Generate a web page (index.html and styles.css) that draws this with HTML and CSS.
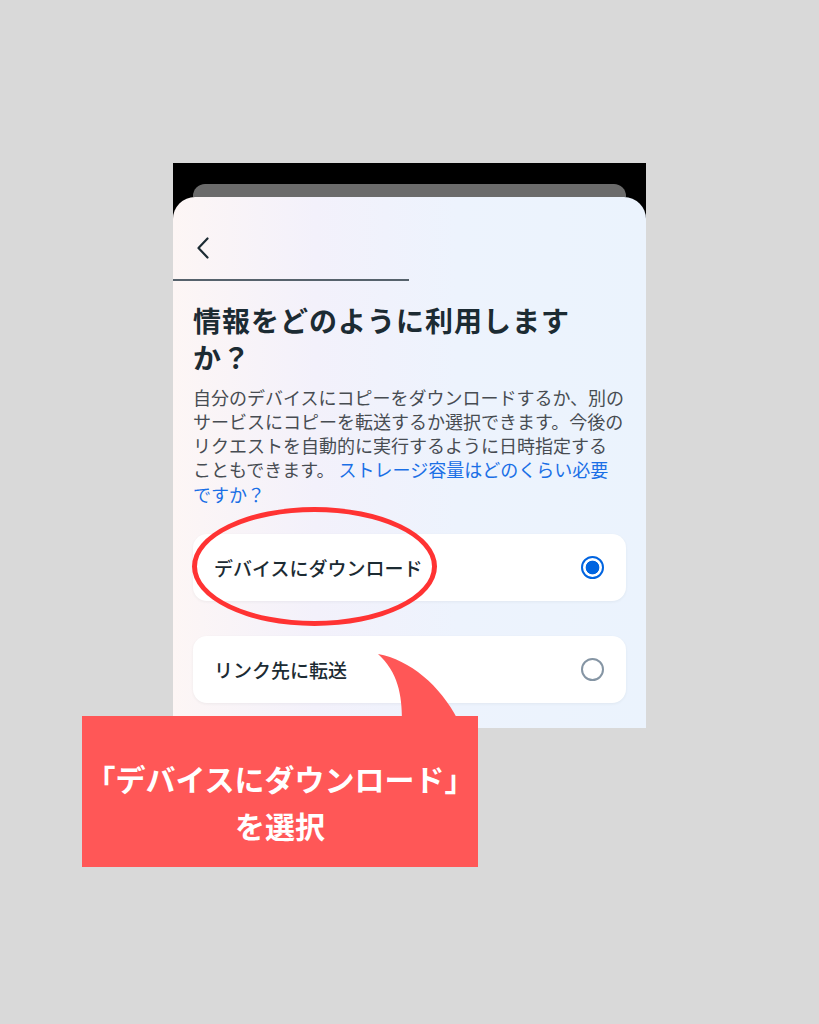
FILE: index.html
```html
<!DOCTYPE html>
<html lang="ja">
<head>
    <meta charset="UTF-8">
    <meta name="viewport" content="width=device-width, initial-scale=1.0">
    <title>情報をどのように利用しますか？</title>
    <link rel="stylesheet" href="styles.css">
</head>
<body>
    <div class="stage">
        <!-- スマホ画面 -->
        <div class="phone">
            <div class="peek"></div>
            <div class="sheet">
                <div class="topbar">
                    <svg class="back" viewBox="0 0 14 22" aria-label="戻る">
                        <path d="M11.5 1.5 L2.5 11 L11.5 20.5" fill="none" stroke="#1c2b33" stroke-width="2.2" stroke-linecap="round" stroke-linejoin="round"/>
                    </svg>
                </div>
                <div class="progress"></div>

                <div class="content">
                    <h1>情報をどのように利用しますか？</h1>
                    <p class="desc">
                        自分のデバイスにコピーをダウンロードするか、別のサービスにコピーを転送するか選択できます。今後のリクエストを自動的に実行するように日時指定する<br>こともできます。 <a href="#">ストレージ容量はどのくらい必要ですか？</a>
                    </p>

                    <div class="options">
                        <div class="option">
                            <span>デバイスにダウンロード</span>
                            <span class="radio checked"></span>
                        </div>
                        <div class="option">
                            <span>リンク先に転送</span>
                            <span class="radio"></span>
                        </div>
                    </div>
                </div>
            </div>
        </div>

        <!-- 注釈 -->
        <div class="mark"></div>
        <svg class="tail" viewBox="0 0 95 70">
            <path d="M8 4 C40 10, 70 35, 88 70 L32 70 C32 45, 28 22, 8 4 Z" fill="#ff5757"/>
        </svg>
        <div class="callout">
            「デバイスにダウンロード」<br>を選択
        </div>
    </div>
</body>
</html>
```

FILE: styles.css
```css
* {
    box-sizing: border-box;
}
body {
    margin: 0;
    background-color: #d9d9d9;
    font-family: "Noto Sans CJK JP", "Noto Sans", sans-serif;
}
.stage {
    position: relative;
    width: 819px;
    height: 1024px;
    overflow: hidden;
}
.phone {
    margin: 163px 0 0 173px;
    width: 473px;
    height: 565px;
    padding-top: 21px;
    background: #000;
    overflow: hidden;
}
.peek {
    height: 13px;
    margin: 0 20px;
    background: #6b6b6b;
    border-radius: 12px 12px 0 0;
}
.sheet {
    height: 531px;
    border-radius: 22px 22px 0 0;
    background: linear-gradient(90deg, #fdf6f5 0%, #f3f1fb 30%, #edf3fd 60%, #ebf3fd 100%);
}
.topbar {
    height: 82px;
    padding: 40px 0 0 23px;
}
.back {
    display: block;
    width: 14px;
    height: 22px;
}
.progress {
    width: 236px;
    height: 1.5px;
    background: #56626c;
}
.content {
    padding: 0 20px;
}
h1 {
    margin: 21px 0 0;
    font-size: 28px;
    line-height: 37px;
    font-weight: 700;
    letter-spacing: 1px;
    color: #1c2b33;
}
.desc {
    margin: 9px 0 0;
    font-size: 18px;
    line-height: 24.3px;
    color: #474c52;
}
.desc a {
    color: #1a6fe6;
    text-decoration: none;
}
.options {
    margin-top: 28px;
    display: flex;
    flex-direction: column;
    gap: 35px;
}
.option {
    display: flex;
    align-items: center;
    justify-content: space-between;
    height: 67px;
    padding: 0 22px 0 21px;
    background: #fff;
    border-radius: 14px;
    box-shadow: 0 1px 3px rgba(28, 43, 51, 0.06);
    font-size: 19px;
    font-weight: 500;
    color: #1c2b33;
}
.radio {
    width: 23px;
    height: 23px;
    border-radius: 50%;
    border: 2px solid #8595a4;
}
.radio.checked {
    border-color: #0064e0;
    background: radial-gradient(circle, #0064e0 0 6.5px, #fff 7.2px);
}
.mark {
    position: absolute;
    left: 192px;
    top: 507px;
    width: 245px;
    height: 119px;
    border: 5px solid #ff3333;
    border-radius: 50%;
}
.tail {
    position: absolute;
    left: 370px;
    top: 650px;
    width: 95px;
    height: 70px;
}
.callout {
    position: absolute;
    left: 82px;
    top: 716px;
    width: 396px;
    height: 151px;
    padding-top: 39px;
    background: #ff5757;
    color: #fff;
    text-align: center;
    font-size: 30px;
    line-height: 47px;
    font-weight: 700;
}
```
